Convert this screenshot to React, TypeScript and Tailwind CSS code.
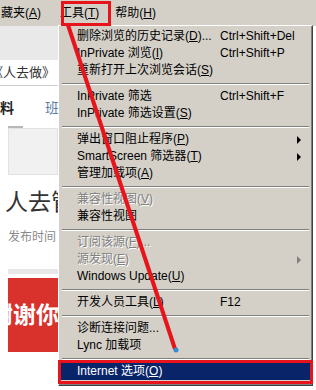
import React from 'react';

type Row = {
  t: string;
  k?: string;
  after?: string;
  sc?: string;
  arrow?: boolean;
  disabled?: boolean;
  active?: boolean;
};

const groups: Row[][] = [
  [
    { t: '删除浏览的历史记录', k: 'D', after: '...', sc: 'Ctrl+Shift+Del' },
    { t: 'InPrivate 浏览', k: 'I', sc: 'Ctrl+Shift+P' },
    { t: '重新打开上次浏览会话', k: 'S' },
  ],
  [
    { t: 'InPrivate 筛选', sc: 'Ctrl+Shift+F' },
    { t: 'InPrivate 筛选设置', k: 'S' },
  ],
  [
    { t: '弹出窗口阻止程序', k: 'P', arrow: true },
    { t: 'SmartScreen 筛选器', k: 'T', arrow: true },
    { t: '管理加载项', k: 'A' },
  ],
  [
    { t: '兼容性视图', k: 'V', disabled: true },
    { t: '兼容性视图' },
  ],
  [
    { t: '订阅该源', k: 'F', after: '...', disabled: true },
    { t: '源发现', k: 'E', arrow: true, disabled: true },
    { t: 'Windows Update', k: 'U' },
  ],
  [{ t: '开发人员工具', k: 'L', sc: 'F12' }],
  [{ t: '诊断连接问题...' }, { t: 'Lync 加载项' }],
  [{ t: 'Internet 选项', k: 'O', active: true }],
];

function Label({ t, k, after }: { t: string; k?: string; after?: string }) {
  return (
    <>
      {t}
      {k && (
        <>
          (<u>{k}</u>)
        </>
      )}
      {after}
    </>
  );
}

function MenuRow({ row }: { row: Row }) {
  const color = row.active
    ? 'bg-[#0a246a] text-white'
    : row.disabled
    ? 'text-[#808080] [text-shadow:1px_1px_0_#ffffff]'
    : 'text-black';
  return (
    <div className={`relative h-[17px] flex items-center pl-[16px] leading-[17px] whitespace-nowrap ${color}`}>
      <span className="w-[143px] leading-[15px]">
        <Label t={row.t} k={row.k} after={row.after} />
      </span>
      {row.sc && <span className="leading-[15px]">{row.sc}</span>}
      {row.arrow && (
        <span
          className={`absolute right-[9px] top-[5px] w-0 h-0 border-y-[4px] border-y-transparent border-l-[4px] ${
            row.disabled ? 'border-l-[#808080]' : 'border-l-black'
          }`}
        />
      )}
    </div>
  );
}

function Separator() {
  return (
    <div className="h-[9px] flex flex-col justify-center px-[1px]">
      <div className="h-px bg-[#808080]" />
      <div className="h-px bg-white" />
    </div>
  );
}

export default function App() {
  return (
    <div className="relative w-[316px] h-[390px] overflow-hidden bg-white font-['Liberation_Sans','Noto_Sans_CJK_SC',sans-serif] text-[12px]">
      {/* menu bar */}
      <div className="h-[26px] bg-[#d4d0c8] flex items-center text-black whitespace-nowrap">
        <span className="ml-[1px]">
          藏夹(<u>A</u>)
        </span>
        <span className="ml-[19px]">
          工具(<u>T</u>)
        </span>
        <span className="ml-[16px]">
          帮助(<u>H</u>)
        </span>
      </div>

      {/* page behind the menu */}
      <div className="w-[58px] flex flex-col overflow-hidden">
        <div className="h-[34px] bg-[#e9e9e9]" />
        <div className="h-[26px] bg-white border-b border-[#cfcfcf] flex items-center whitespace-nowrap text-[13px] text-[#333]">
          <span className="ml-[-10px]">《人去做》</span>
        </div>
        <div className="h-[36px] flex items-center whitespace-nowrap text-[14px] pt-[8px]">
          <span className="font-bold text-[#222]">料</span>
          <span className="ml-[31px] text-[#5b7ea5]">班</span>
        </div>
        <div className="h-[6px] flex items-end pl-[8px]">
          <div className="w-[15px] h-[2px] bg-[#b8b8b8]" />
        </div>
        <div className="ml-[8px] h-[47px] bg-[#f1f1f1] border border-[#e2e2e2]" />
        <div className="h-[42px] flex items-end pl-[5px] text-[23px] leading-[30px] text-[#333] whitespace-nowrap">
          人去管理
        </div>
        <div className="h-[32px] flex items-center pl-[8px] text-[12px] text-[#8a8a8a] whitespace-nowrap pt-[8px]">
          发布时间
        </div>
        <div className="h-[20px]" />
        <div className="ml-[8px] h-[5px] bg-[#e8e8e8]" />
        <div className="h-[4px]" />
        <div className="ml-[8px] h-[74px] bg-[#d9322d] flex items-center whitespace-nowrap overflow-visible">
          <span className="ml-[-18px] text-[23px] font-bold text-white leading-none">谢谢你</span>
        </div>
      </div>

      {/* dropdown menu */}
      <div className="absolute left-[58px] top-[25px] w-[255px] bg-[#d4d0c8] border border-t-white border-l-white border-r-[#404040] border-b-[#404040] shadow-[inset_-1px_-1px_0_#808080] p-[2px]">
        {groups.map((g, gi) => (
          <div key={gi}>
            {g.map((r, ri) => (
              <MenuRow key={ri} row={r} />
            ))}
            {gi < groups.length - 1 && <Separator />}
          </div>
        ))}
        <div className="h-[3px]" />
      </div>

      {/* red annotation */}
      <svg className="absolute inset-0 pointer-events-none" width="316" height="390">
        <rect x="62.5" y="2.5" width="47" height="22" fill="none" stroke="#e8141b" strokeWidth="3" />
        <line x1="68" y1="25" x2="175" y2="349" stroke="#e8141b" strokeWidth="4" />
        <circle cx="176" cy="350" r="2.5" fill="#2f8fd6" />
        <rect x="59.5" y="361.5" width="252" height="21" fill="none" stroke="#e8141b" strokeWidth="3" />
      </svg>
    </div>
  );
}
